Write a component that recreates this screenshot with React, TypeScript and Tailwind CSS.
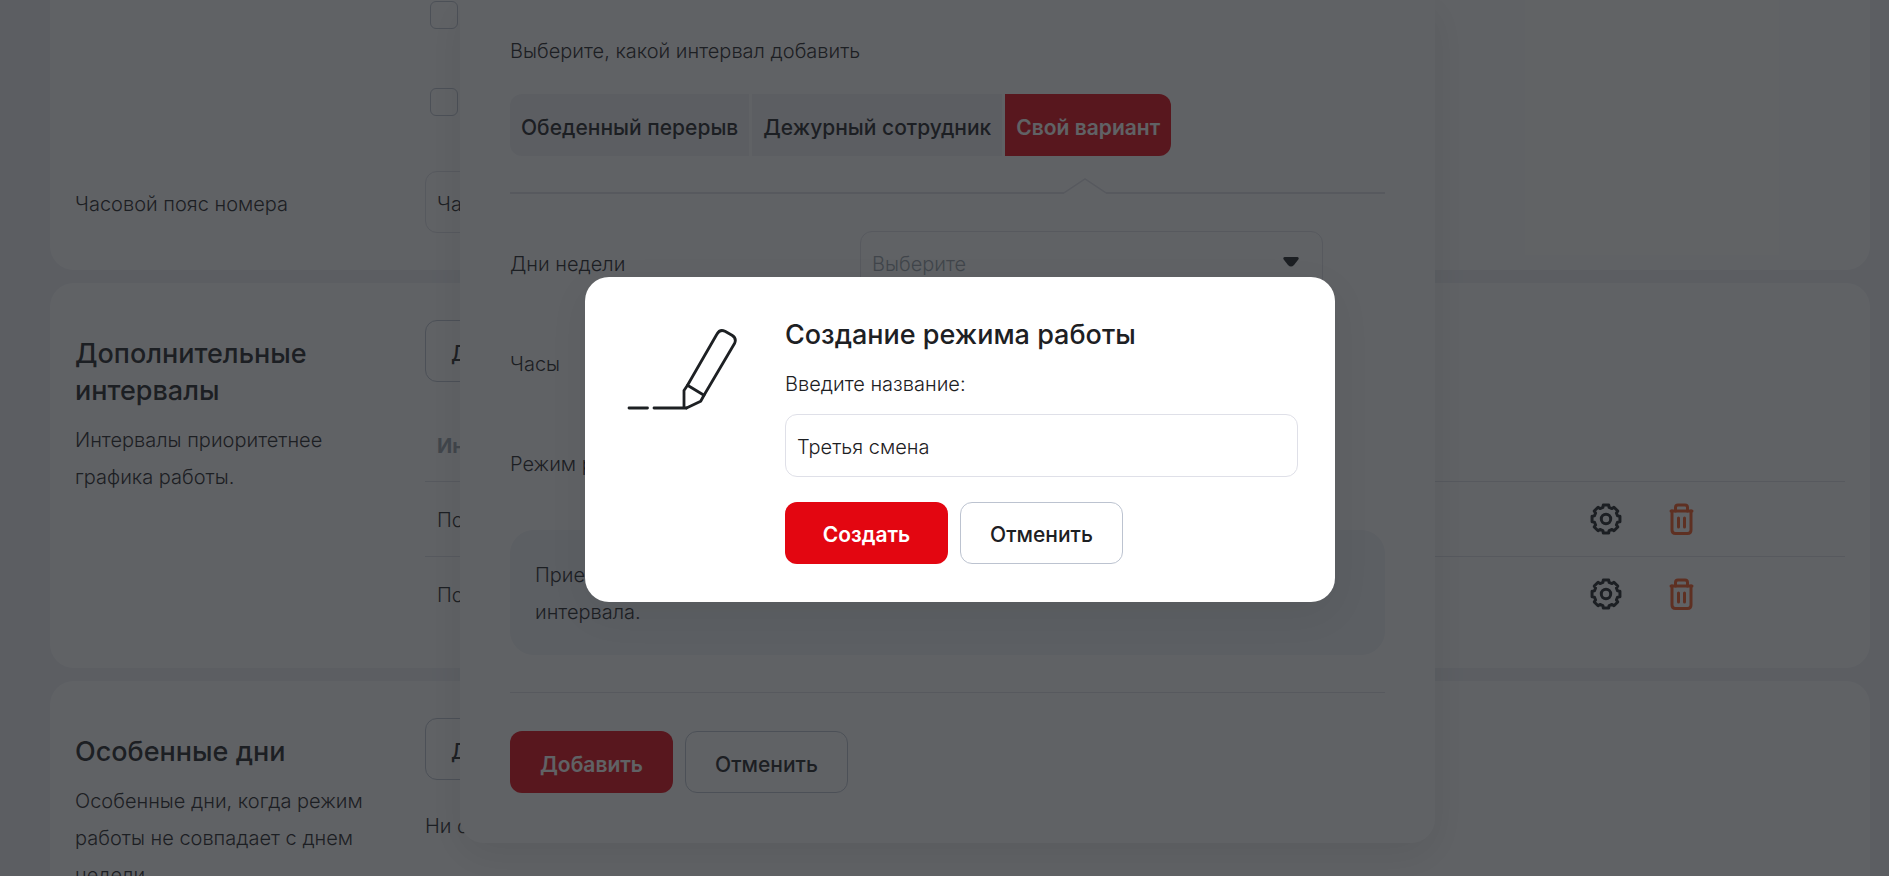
import React, { useState } from 'react';

const GEAR_PATH = Array.from({ length: 8 }, (_, i) => {
  const point = (deg: number, r: number) => {
    const a = ((i * 45 + deg - 90) * Math.PI) / 180;
    return `${(16 + r * Math.cos(a)).toFixed(2)} ${(16 + r * Math.sin(a)).toFixed(2)}`;
  };
  return `${i === 0 ? 'M' : 'L'}${point(-11, 14.2)}L${point(11, 14.2)}L${point(15, 12)}L${point(30, 12)}`;
}).join('') + 'Z';

const GearIcon = () => (
  <svg width="32" height="32" viewBox="0 0 32 32" fill="none" stroke="#1d2023" strokeWidth="3" strokeLinejoin="round" aria-hidden="true">
    <path d={GEAR_PATH} />
    <circle cx="16" cy="16" r="4.7" />
  </svg>
);

const TrashIcon = () => (
  <svg width="25" height="32" viewBox="0 0 25 32" fill="none" stroke="#f95721" strokeWidth="3" strokeLinecap="round" strokeLinejoin="round" aria-hidden="true">
    <path d="M2 8H23" />
    <path d="M6.5 8V4.5Q6.5 2 9 2H16Q18.5 2 18.5 4.5V8" />
    <path d="M3 8V27Q3 30.5 6.5 30.5H18.5Q22 30.5 22 27V8" />
    <path d="M9.5 15V24M15.5 15V24" />
  </svg>
);

const PencilIcon = () => (
  <svg width="110" height="83" viewBox="0 0 110 83" fill="none" stroke="#1d2023" strokeWidth="2.8" strokeLinecap="round" strokeLinejoin="round" aria-hidden="true">
    <path d="M2 80H20.5M27 80H59.5" />
    <path d="M57 79.5V62.5L60.5 57.3L90 6Q92.8 0.8 98 3.2L105 7.3Q110 10.5 107.5 15.5L77 67.3L73.7 73.2L59.5 80" />
    <path d="M60.5 57.3L77 67.3" />
  </svg>
);

type ButtonProps = {
  primary?: boolean;
  children: React.ReactNode;
};

const Button = ({ primary, children }: ButtonProps) => (
  <button
    type="button"
    className={
      primary
        ? 'h-[62px] min-w-[163px] rounded-xl bg-[#e30611] px-[25px] pt-1 text-[21px] font-semibold text-white'
        : 'h-[62px] min-w-[163px] rounded-xl border border-[#bcc3d0] bg-white px-[25px] pt-1 text-[21px] font-medium'
    }
  >
    {children}
  </button>
);

const App = () => {
  const tabs = ['Обеденный перерыв', 'Дежурный сотрудник', 'Свой вариант'];
  const intervals = ['Понедельник', 'Пологий график'];
  const [activeTab, setActiveTab] = useState('Свой вариант');
  const [name, setName] = useState('Третья смена');

  return (
    <div className="h-screen bg-white pb-0.5 font-['Inter',sans-serif] text-[20px] leading-[37px] font-light text-[#1d2023]">
      <div className="relative h-full overflow-hidden bg-[#f1f2f6]">
        {/* Settings page */}
        <main className="flex flex-col gap-[13px] pr-[19px] pl-[50px]">
          <section className="rounded-b-3xl bg-white px-[25px] pt-px pb-[37px]">
            <div className="flex flex-col gap-[59px] pl-[355px]">
              <input type="checkbox" aria-label="Рабочий день" className="size-7 appearance-none rounded-md border border-[#bcc3d0]" />
              <input type="checkbox" aria-label="Выходной день" className="size-7 appearance-none rounded-md border border-[#bcc3d0]" />
            </div>
            <div className="mt-[55px] flex items-center">
              <label htmlFor="timezone" className="w-[350px] pt-1">Часовой пояс номера</label>
              <input id="timezone" readOnly value="Часовой" className="h-[62px] w-[400px] rounded-xl border border-[#dfe0e8] px-[11px] pt-1" />
            </div>
          </section>

          <section className="flex rounded-3xl bg-white px-[25px] py-[37px]">
            <div className="w-[350px] shrink-0 pt-[15px]">
              <h2 className="text-[27px] font-medium">Дополнительные<br />интервалы</h2>
              <p className="mt-[13px]">Интервалы приоритетнее<br />графика работы.</p>
            </div>
            <div className="grow">
              <Button>Добавить интервал</Button>
              <table className="mt-[31px] w-full table-fixed text-left">
                <thead>
                  <tr className="h-[68px] border-b border-[#dfe0e8]">
                    <th className="px-3 font-bold text-[#969fa8]">Интервал</th>
                    <th className="w-[205px]" aria-label="Настроить" />
                    <th className="w-[200px]" aria-label="Удалить" />
                  </tr>
                </thead>
                <tbody>
                  {intervals.map((interval) => (
                    <tr key={interval} className="h-[75px] border-b border-[#dfe0e8] last:border-b-0">
                      <td className="px-3 pt-1">{interval}</td>
                      <td>
                        <button type="button" aria-label="Настроить" className="mr-[23px] ml-auto block"><GearIcon /></button>
                      </td>
                      <td>
                        <button type="button" aria-label="Удалить" className="ml-6 block"><TrashIcon /></button>
                      </td>
                    </tr>
                  ))}
                </tbody>
              </table>
            </div>
          </section>

          <section className="flex rounded-3xl bg-white px-[25px] py-[37px]">
            <div className="w-[350px] shrink-0 pt-[15px]">
              <h2 className="text-[27px] font-medium">Особенные дни</h2>
              <p className="mt-[13px]">Особенные дни, когда режим<br />работы не совпадает с днем<br />недели.</p>
            </div>
            <div className="grow">
              <Button>Добавить день</Button>
              <p className="mt-7">Ни одного</p>
            </div>
          </section>
        </main>

        {/* Interval modal */}
        <div className="absolute inset-0 flex items-start justify-center pl-[6px]">
          <div className="w-[975px] rounded-b-3xl bg-white px-[50px] pt-[33px] pb-[50px] shadow-[0_12px_40px_rgba(0,0,0,0.1)]">
            <p>Выберите, какой интервал добавить</p>
            <div className="mt-6 flex gap-[3px]">
              {tabs.map((tab) => (
                <button
                  key={tab}
                  type="button"
                  onClick={() => setActiveTab(tab)}
                  className={
                    tab === activeTab
                      ? 'h-[62px] bg-[#e30611] px-[11px] pt-1 text-[21px] font-semibold text-white first:rounded-l-xl last:rounded-r-xl'
                      : 'h-[62px] bg-[#f1f2f6] px-[11px] pt-1 text-[21px] font-medium first:rounded-l-xl last:rounded-r-xl'
                  }
                >
                  {tab}
                </button>
              ))}
            </div>
            <div className="mt-[22px] flex items-end">
              <div className="h-0.5 w-[554px] bg-[#dfe0e8]" />
              <svg width="42" height="16" viewBox="0 0 42 16" fill="none" stroke="#dfe0e8" strokeWidth="1.5" aria-hidden="true">
                <path d="M0 15L21 1L42 15" />
              </svg>
              <div className="h-0.5 grow bg-[#dfe0e8]" />
            </div>

            <div className="mt-[37px] flex flex-col gap-[38px]">
              <div className="flex h-[62px] items-center">
                <label htmlFor="days" className="w-[350px] pt-1">Дни недели</label>
                <div className="relative">
                  <select id="days" className="block h-[62px] w-[463px] appearance-none rounded-xl border border-[#dfe0e8] px-[11px] pt-1 text-[#969fa8]">
                    <option>Выберите</option>
                  </select>
                  <svg className="pointer-events-none absolute top-[26px] right-6" width="16" height="10" viewBox="0 0 16 10" fill="#1d2023" aria-hidden="true">
                    <path d="M1.5 0H14.5Q16.5 0.5 15.3 2.6L11 8Q8 11 5 8L0.7 2.6Q-0.5 0.5 1.5 0Z" />
                  </svg>
                </div>
              </div>
              <div className="flex h-[62px] items-center pt-1">Часы</div>
              <div className="flex h-[62px] items-center pt-1">Режим работы</div>
            </div>

            <p className="mt-[37px] rounded-3xl bg-[#f0f3f7] px-[25px] pt-[27px] pb-6">
              Прием звонков по графику выбранного<br />интервала.
            </p>
            <div className="mt-[37px] flex gap-3 border-t border-[#dfe0e8] pt-[38px]">
              <Button primary>Добавить</Button>
              <Button>Отменить</Button>
            </div>
          </div>
        </div>

        {/* Name dialog over the dimmed page */}
        <div className="absolute inset-0 flex items-center justify-center bg-[#1d2023]/70 pt-0.5 pl-[31px]">
          <form
            role="dialog"
            aria-labelledby="dialog-title"
            onSubmit={(e) => e.preventDefault()}
            className="flex w-[750px] rounded-3xl bg-white pt-[39px] pr-[37px] pb-[38px] shadow-[0_12px_40px_rgba(0,0,0,0.06)]"
          >
            <div className="w-[200px] shrink-0 pt-3 pl-[42px]">
              <PencilIcon />
            </div>
            <div className="grow">
              <h1 id="dialog-title" className="text-[27px] font-medium">Создание режима работы</h1>
              <label htmlFor="mode-name" className="mt-[13px] block">Введите название:</label>
              <input
                id="mode-name"
                value={name}
                onChange={(e) => setName(e.target.value)}
                className="mt-[11px] block h-[63px] w-full rounded-xl border border-[#dfe0e8] px-[11px] pt-1 outline-none"
              />
              <div className="mt-[25px] flex gap-3">
                <Button primary>Создать</Button>
                <Button>Отменить</Button>
              </div>
            </div>
          </form>
        </div>
      </div>
    </div>
  );
};

export default App;
